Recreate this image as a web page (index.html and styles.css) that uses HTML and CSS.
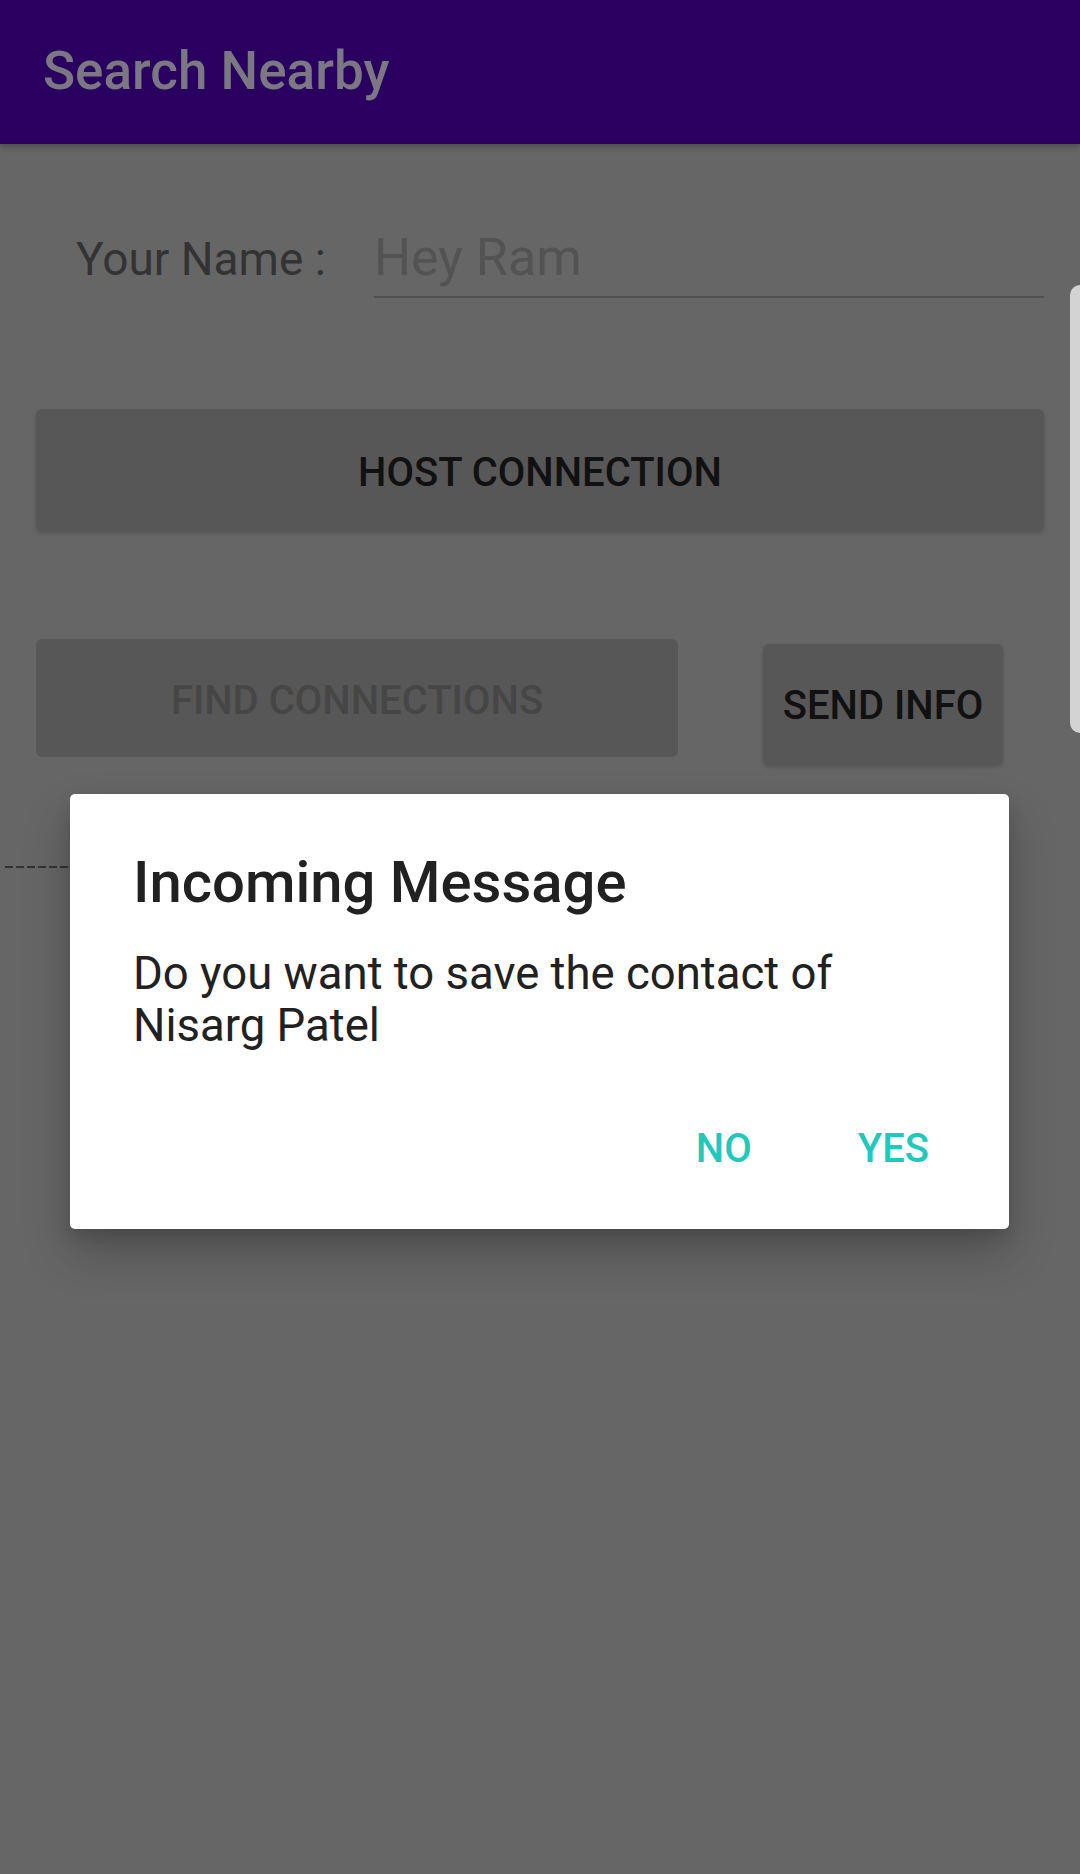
FILE: index.html
```html
<!DOCTYPE html>
<html lang="en">
<head>
  <meta charset="UTF-8">
  <meta name="viewport" content="width=device-width, initial-scale=1.0">
  <title>Search Nearby</title>
  <link rel="stylesheet" href="styles.css">
</head>
<body>
  <header class="appbar">
    <h1 class="appbar-title">Search Nearby</h1>
  </header>

  <main class="content">
    <div class="name-row">
      <label class="name-label" for="name">Your Name :</label>
      <div class="name-input" id="name">Hey Ram</div>
    </div>

    <button class="btn btn-host">HOST CONNECTION</button>

    <div class="action-row">
      <button class="btn btn-find" disabled>FIND CONNECTIONS</button>
      <button class="btn btn-send">SEND INFO</button>
    </div>

    <div class="divider"></div>
  </main>

  <div class="scrollbar"></div>

  <!-- dialog sits over the dimmed screen -->
  <div class="dialog">
    <h2 class="dialog-title">Incoming Message</h2>
    <p class="dialog-text">Do you want to save the contact of<br>Nisarg Patel</p>
    <div class="dialog-actions">
      <button class="dialog-btn">NO</button>
      <button class="dialog-btn">YES</button>
    </div>
  </div>
</body>
</html>
```

FILE: styles.css
```css
* {
  margin: 0;
  padding: 0;
  box-sizing: border-box;
}

body {
  width: 1080px;
  height: 1874px;
  position: relative;
  overflow: hidden;
  background-color: #666666;
  font-family: 'Roboto', 'Noto Sans', sans-serif;
}

.appbar {
  height: 144px;
  background-color: #29005f;
  padding-left: 43px;
  display: flex;
  align-items: center;
  box-shadow: 0 3px 6px rgba(0, 0, 0, 0.25);
  position: relative;
}

.appbar-title {
  font-size: 53px;
  font-weight: 500;
  line-height: 64px;
  color: #7b7884;
  margin-top: -2px;
}

.content {
  padding-top: 82px;
}

.name-row {
  display: flex;
  align-items: baseline;
  padding-left: 76px;
}

.name-label {
  width: 298px;
  font-size: 46px;
  line-height: 56px;
  color: #333333;
}

.name-input {
  width: 670px;
  font-size: 52px;
  line-height: 64px;
  color: #535353;
  padding-bottom: 6px;
  border-bottom: 2px solid #505050;
}

.btn {
  display: block;
  border: none;
  border-radius: 6px;
  background-color: #575757;
  font-family: 'Roboto', 'Noto Sans', sans-serif;
  font-size: 40px;
  font-weight: 500;
  color: #111111;
  box-shadow: 0 2px 4px rgba(0, 0, 0, 0.18);
}

.btn-host {
  width: 1008px;
  height: 122px;
  margin: 111px 36px 0;
  padding-top: 4px;
}

.action-row {
  display: flex;
  align-items: flex-start;
  margin-top: 108px;
  padding-left: 36px;
}

.btn-find {
  width: 642px;
  height: 118px;
  color: #464646;
  box-shadow: none;
  padding-top: 4px;
}

.btn-send {
  width: 240px;
  height: 121px;
  margin-top: 5px;
  margin-left: 85px;
  padding-top: 2px;
}

.divider {
  width: 900px;
  height: 2px;
  margin: 101px 0 0 5px;
  background: repeating-linear-gradient(90deg, #333333 0 8px, transparent 8px 11px);
}

.scrollbar {
  position: absolute;
  top: 285px;
  right: 0;
  width: 10px;
  height: 448px;
  background-color: #d3d3d3;
  border-radius: 10px 0 0 10px;
}

.dialog {
  position: absolute;
  left: 70px;
  top: 794px;
  width: 939px;
  height: 435px;
  background-color: #ffffff;
  border-radius: 5px;
  padding: 55px 0 0 63px;
  box-shadow: 0 24px 48px rgba(0, 0, 0, 0.22), 0 8px 16px rgba(0, 0, 0, 0.12);
}

.dialog-title {
  font-size: 58px;
  font-weight: 500;
  line-height: 66px;
  color: #212121;
}

.dialog-text {
  margin-top: 33px;
  font-size: 45.5px;
  line-height: 52px;
  color: #212121;
}

.dialog-actions {
  display: flex;
  justify-content: flex-end;
  gap: 106px;
  margin-top: 73px;
  padding-right: 80px;
}

.dialog-btn {
  border: none;
  background: none;
  font-family: 'Roboto', 'Noto Sans', sans-serif;
  font-size: 40px;
  font-weight: 500;
  line-height: 48px;
  color: #1fc9bc;
}
```
